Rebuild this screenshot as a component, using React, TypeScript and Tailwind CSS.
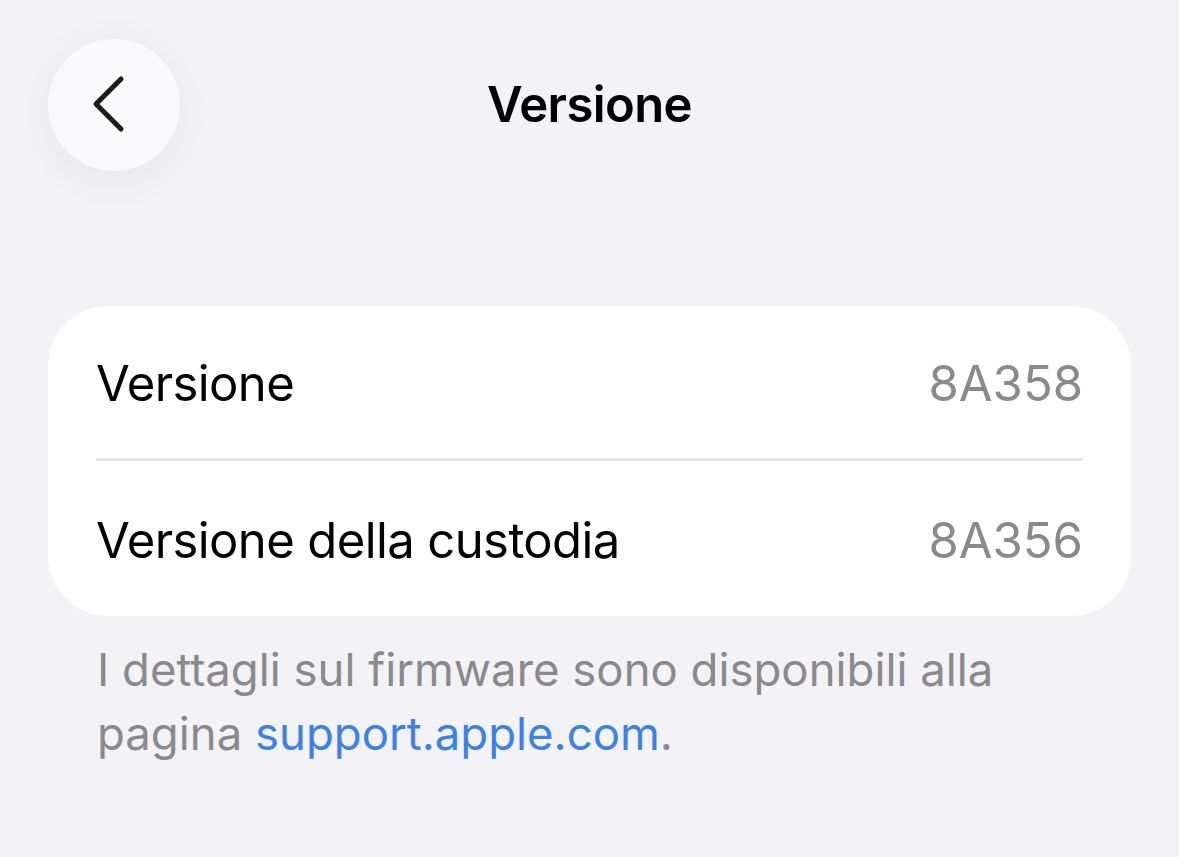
import React from 'react';

const rows = [
  { label: 'Versione', value: '8A358' },
  { label: 'Versione della custodia', value: '8A356' },
];

export default function App() {
  return (
    <div
      className="w-[1179px] h-[857px] bg-[#f2f2f7] overflow-hidden"
      style={{ fontFamily: 'Inter, "Noto Sans", sans-serif' }}
    >
      {/* Nav bar */}
      <div className="flex items-center h-[132px] mt-[39px] px-[48px]">
        <button className="w-[132px] h-[132px] rounded-full bg-[#fafafd] flex items-center justify-center shadow-[0_8px_40px_rgba(0,0,0,0.06)] shrink-0">
          <svg width="40" height="60" viewBox="0 0 40 60" fill="none" className="-ml-[6px]">
            <path d="M30 4 L5 29 L30 54" stroke="#1c1c1e" strokeWidth="5" strokeLinecap="round" strokeLinejoin="round" />
          </svg>
        </button>
        <h1 className="flex-1 text-center text-[49px] font-semibold text-black tracking-[-0.6px] -ml-[132px]">
          Versione
        </h1>
      </div>

      {/* Card */}
      <div className="mx-[48px] mt-[135px] bg-white rounded-[60px] px-[48px]">
        {rows.map((row, i) => (
          <div
            key={row.label}
            className={`flex items-center justify-between h-[155px] pt-[4px] ${i === 0 ? 'border-b-[3px] border-[#e5e5ea]' : ''}`}
          >
            <span className="text-[49px] text-black tracking-[-0.6px]">{row.label}</span>
            <span className="text-[49px] text-[#8a8a8e]">{row.value}</span>
          </div>
        ))}
      </div>

      {/* Footer */}
      <p className="mx-[97px] mt-[22px] text-[45.5px] leading-[64px] text-[#8a8a8e]">
        I dettagli sul firmware sono disponibili alla pagina{' '}
        <span className="text-[#3b82e6]">support.apple.com</span>.
      </p>
    </div>
  );
}
